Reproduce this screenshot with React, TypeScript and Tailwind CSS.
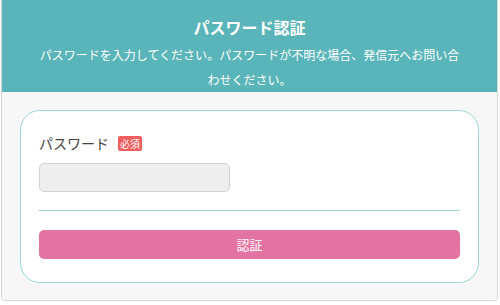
export default function App() {
  return (
    <div
      className="w-[500px] h-[305px] bg-white"
      style={{ fontFamily: '"Noto Sans CJK JP", "Noto Sans", sans-serif' }}
    >
      <div className="ml-[1px] w-[497px] h-[301px] flex flex-col border border-t-0 border-[#d6d6d6] rounded-b-[4px] overflow-hidden">
        <header className="bg-[#59b5b9] pt-[15px] text-white text-center">
          <h1 className="text-[16px] leading-6 font-bold">パスワード認証</h1>
          <p className="mt-[3px] mx-auto w-[424px] text-[12px] leading-[25px]">
            パスワードを入力してください。パスワードが不明な場合、発信元へお問い合わせください。
          </p>
        </header>
        <main className="flex-1 bg-[#f7f7f7] px-[18px] pt-[18px]">
          <div className="bg-white border border-[#9ed5d8] rounded-[20px] px-[18px] pt-[20px] pb-[23px]">
            <div className="flex items-center gap-[9px] h-6">
              <span className="text-[14px] text-[#444]">パスワード</span>
              <span className="bg-[#f05d5d] text-white text-[10px] leading-[15px] px-[2px] rounded-[2px]">
                必須
              </span>
            </div>
            <input
              type="password"
              className="mt-[8px] block w-[191px] h-[29px] bg-[#eeeeee] border border-[#d2d2d2] rounded-[5px]"
            />
            <hr className="mt-[18px] border-0 h-px bg-[#9ed5d8]" />
            <button className="mt-[19px] w-full h-[29px] bg-[#e373a0] rounded-[5px] text-white text-[13px]">
              認証
            </button>
          </div>
        </main>
      </div>
    </div>
  );
}
